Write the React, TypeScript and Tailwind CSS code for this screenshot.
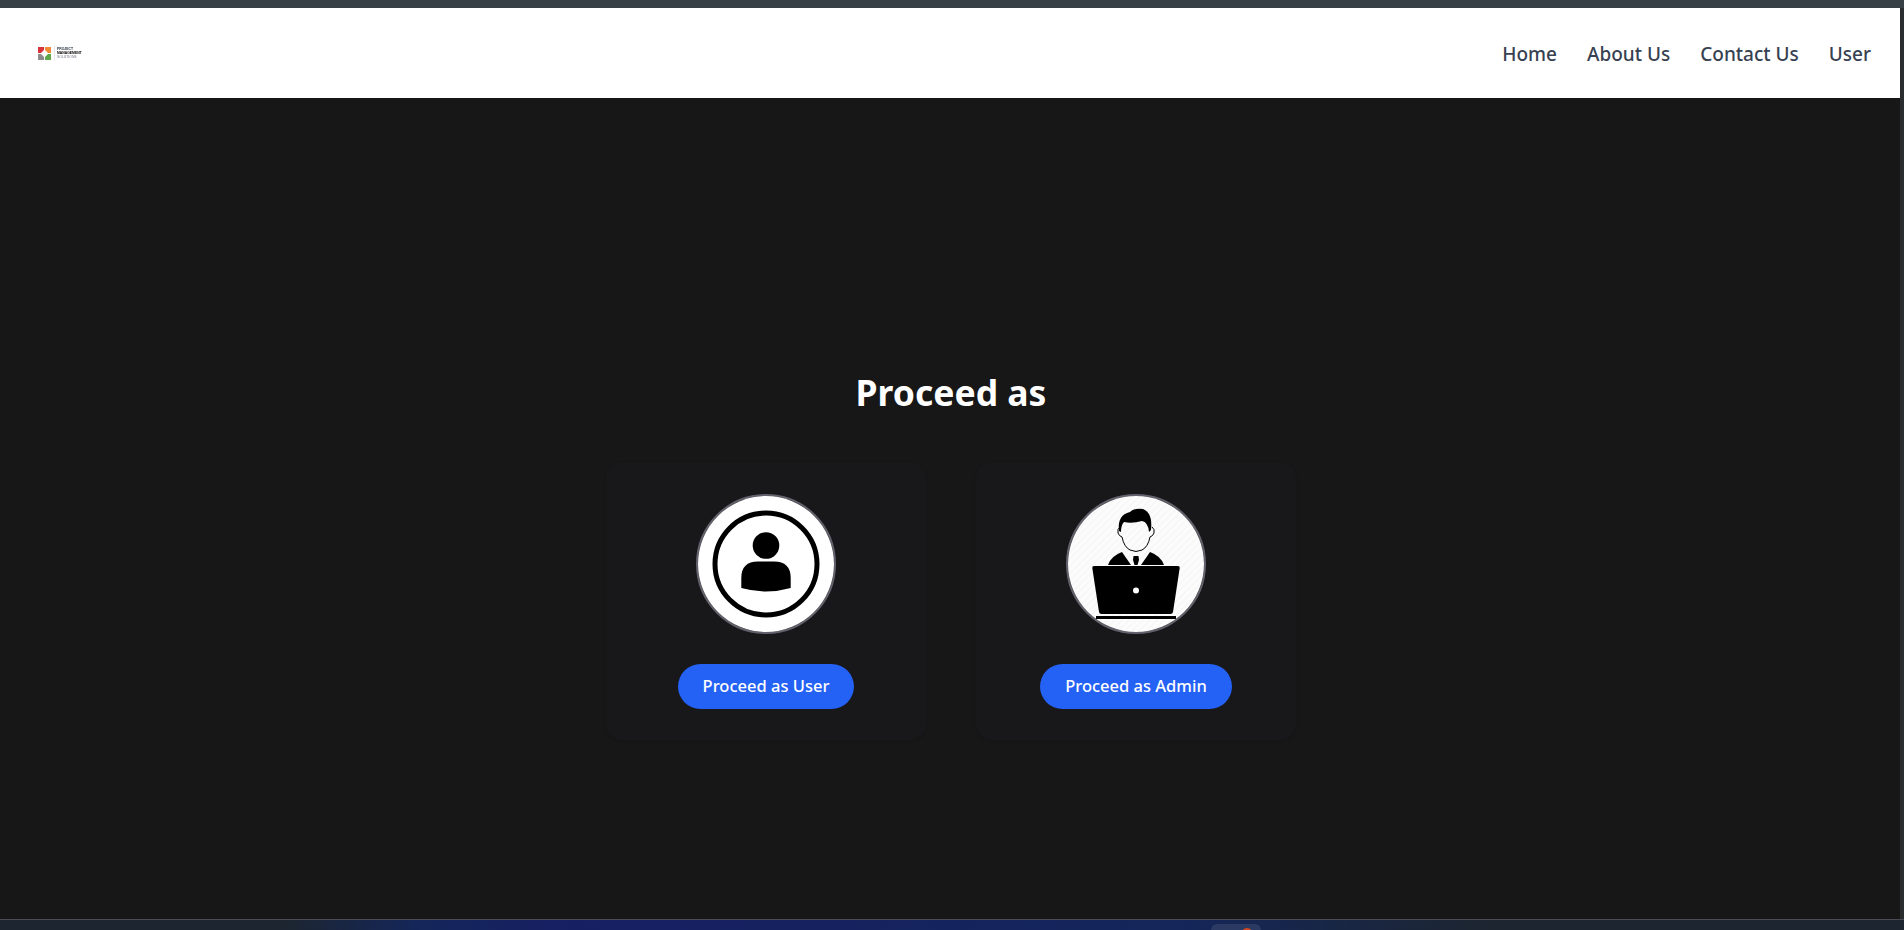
const font = "font-['Noto_Sans',sans-serif]";

function Logo() {
  return (
    <div className="flex items-center gap-[1px] blur-[0.4px]">
      <svg width="15" height="15" viewBox="0 0 15 15">
        <path d="M1 1h6v3L4 7H1z" fill="#d8343a" />
        <path d="M8 1h6v6h-3L8 4z" fill="#f08a35" />
        <path d="M1 8h3l3 3v3H1z" fill="#8c8c8c" />
        <path d="M8 14v-3l3-3h3v6z" fill="#5fa84a" />
      </svg>
      <div className="ml-[1px] h-[16px] w-px bg-gray-200" />
      <div className="ml-[1px] flex flex-col font-['Liberation_Sans',sans-serif] text-[3.4px] leading-[4px]">
        <span className="font-bold text-gray-800">PROJECT</span>
        <span className="font-bold text-black">MANAGEMENT</span>
        <span className="text-gray-500">SOLUTIONS</span>
      </div>
    </div>
  );
}

function UserIcon() {
  return (
    <svg viewBox="0 0 136 136" className="h-full w-full">
      <rect width="136" height="136" fill="#fff" />
      <circle cx="68" cy="68" r="51" fill="none" stroke="#000" strokeWidth="5" />
      <circle cx="68" cy="49.5" r="13.3" fill="#000" />
      <path d="M43.3 92V82Q43.3 65.5 60 65.5H76Q92.7 65.5 92.7 82V92Q68 99 43.3 92Z" fill="#000" />
    </svg>
  );
}

function AdminIcon() {
  return (
    <svg viewBox="0 0 136 136" className="h-full w-full">
      <defs>
        <pattern id="stripes" width="5" height="5" patternUnits="userSpaceOnUse" patternTransform="rotate(45)">
          <rect width="5" height="5" fill="#fcfcfc" />
          <rect width="1.4" height="5" fill="#f6f6f6" />
        </pattern>
      </defs>
      <rect width="136" height="136" fill="url(#stripes)" />
      <g transform="translate(0 1)">
        {/* hair */}
        <path d="M51 34Q49 18 62 15Q66 11 75 12Q85 16 83 33L81 35Q80 25 74 24Q64 27 56 25Q53 28 53 35Z" fill="#000" />
        {/* face outline */}
        <path
          d="M52 30Q49 32 50 36Q51 39 54 40Q56 50 62 53Q68 56 74 53Q80 50 82 40Q85 39 86 36Q87 32 84 30"
          fill="none"
          stroke="#000"
          strokeWidth="1"
        />
      </g>
      {/* shoulders and tie */}
      <path d="M40 69Q43 60 54 56L63 69Z" fill="#000" />
      <path d="M96 69Q93 60 82 56L73 69Z" fill="#000" />
      <path d="M65.5 60H70.5L71 64L69.5 69H66.5L65 64Z" fill="#000" />
      {/* laptop */}
      <path
        d="M26 70H110Q112 70 111.7 72L105 116Q104.6 118 102.5 118H33.5Q31.4 118 31 116L24.3 72Q24 70 26 70Z"
        fill="#000"
      />
      <rect x="28" y="120" width="80" height="3" fill="#000" />
      <circle cx="68" cy="94.5" r="3" fill="#fff" />
    </svg>
  );
}

function RoleCard({ label, icon }: { label: string; icon: React.ReactNode }) {
  return (
    <div className="flex w-[320px] flex-col items-center rounded-2xl bg-[#18181b] px-8 pb-[31px] pt-8 shadow-[0_1px_3px_rgba(0,0,0,0.1)]">
      <div className="h-[140px] w-[140px] overflow-hidden rounded-full border-2 border-[#62626c]">{icon}</div>
      <button className="mt-[30px] h-[45px] rounded-full bg-[#2461f5] px-[25px] text-[16.5px] font-medium text-white">
        {label}
      </button>
    </div>
  );
}

export default function App() {
  return (
    <div className={`flex h-[930px] flex-col overflow-hidden bg-[#171717] ${font}`}>
      <div className="h-2 shrink-0 bg-[#374045]" />
      <div className="flex min-h-0 flex-1">
        <div className="flex w-[1900px] flex-col">
          <nav className="flex h-[90px] shrink-0 items-center justify-between bg-white pl-[37px] pr-[29px]">
            <Logo />
            <ul className="mt-[2px] flex gap-[30px] text-[19px] font-medium text-[#374151]">
              <li>Home</li>
              <li>About Us</li>
              <li>Contact Us</li>
              <li>User</li>
            </ul>
          </nav>
          <main className="flex w-[1902px] flex-1 flex-col items-center pt-[274px]">
            <h1 className="text-[35.5px] leading-10 font-bold text-white">Proceed as</h1>
            <div className="mt-[50px] flex gap-[50px]">
              <RoleCard label="Proceed as User" icon={<UserIcon />} />
              <RoleCard label="Proceed as Admin" icon={<AdminIcon />} />
            </div>
          </main>
        </div>
        <div className="w-1 bg-[#2a2c2d]" />
      </div>
      <div className="h-[11px] shrink-0 overflow-hidden border-t border-[#4a4d55] bg-[linear-gradient(90deg,#1c2530_0%,#1c2530_15%,#14265a_22%,#171f63_30%,#14265a_62%,#1c2530_78%,#1c2530_100%)] pl-[1211px] pt-[4px]">
        <div className="flex h-[20px] w-[50px] justify-end rounded-t-md bg-[#2a3a63] pr-[8px] pt-[4px]">
          <div className="h-[12px] w-[12px] rounded-full bg-[#d9481c]" />
        </div>
      </div>
    </div>
  );
}
